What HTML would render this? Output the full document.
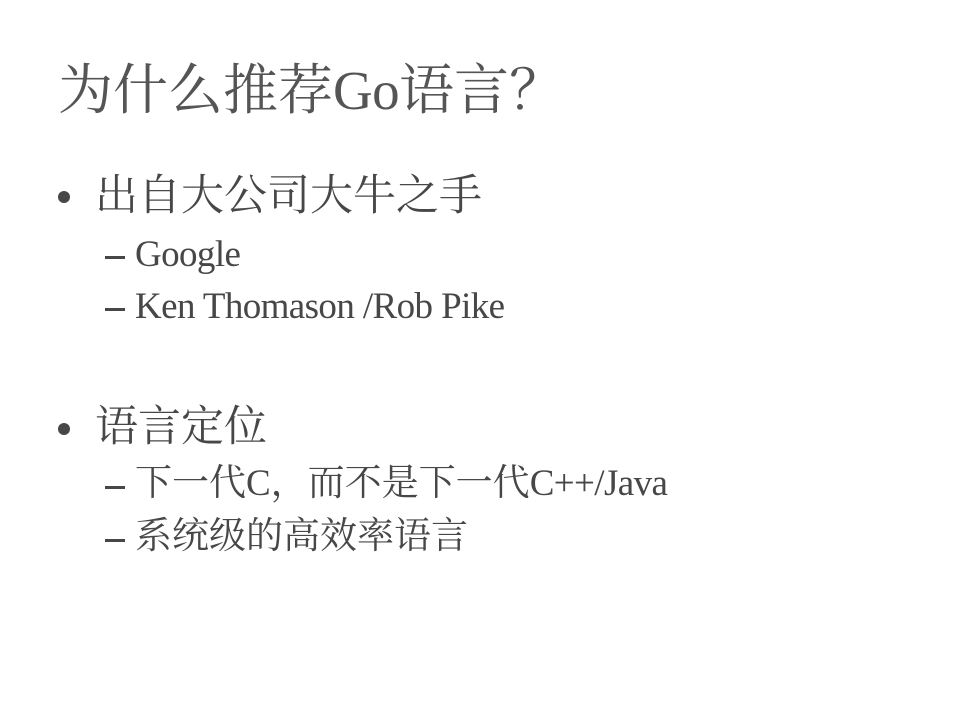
<!DOCTYPE html>
<html><head><meta charset="utf-8"><style>
html,body{margin:0;padding:0;width:960px;height:720px;background:#fff;overflow:hidden}
div{position:absolute;white-space:nowrap;color:#474747;font-family:"Liberation Serif","Noto Serif CJK SC",serif;line-height:1}
.t{font-size:55px;left:58px;top:58px;color:#555}
.b{font-size:43px;left:95px}
.d{font-size:37px;left:135px}
.l{letter-spacing:-0.6px}
.bul{left:58px;width:12px;height:12px;border-radius:50%;background:#474747}
.dash{left:105px;width:20px;height:3px;background:#474747}
</style></head><body>
<div class="t">为什么推荐<span class="l">Go</span>语言<span style="font-family:'Noto Serif CJK SC',serif">？</span></div>
<div class="bul" style="top:191px"></div>
<div class="b" style="top:175px">出自大公司大牛之手</div>
<div class="dash" style="top:256px"></div>
<div class="d l" style="top:236px">Google</div>
<div class="dash" style="top:308px"></div>
<div class="d l" style="top:288px">Ken Thomason /Rob Pike</div>
<div class="bul" style="top:423px"></div>
<div class="b" style="top:406px">语言定位</div>
<div class="dash" style="top:486px"></div>
<div class="d" style="top:465px">下一代C，而不是下一代<span class="l">C++/Java</span></div>
<div class="dash" style="top:539px"></div>
<div class="d" style="top:518px">系统级的高效率语言</div>
</body></html>
